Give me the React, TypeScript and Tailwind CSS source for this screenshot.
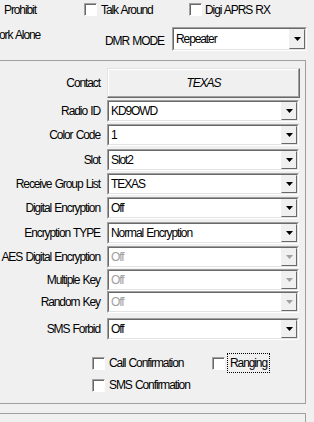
import React from 'react';

const font = { fontFamily: "'Liberation Sans', Arial, sans-serif" };

function Arrow({ disabled }: { disabled?: boolean }) {
  return (
    <svg width="7" height="4" viewBox="0 0 7 4">
      <path d="M0 0h7L3.5 4z" fill={disabled ? '#a0a0a0' : '#000'} />
    </svg>
  );
}

function Combo({ value, disabled, className = '' }: { value: string; disabled?: boolean; className?: string }) {
  return (
    <div className={`flex shrink-0 border border-t-[#a0a0a0] border-l-[#a0a0a0] border-b-white border-r-white ${className}`}>
      <div className="flex flex-1 items-stretch bg-white border border-t-[#696969] border-l-[#696969] border-b-[#e3e3e3] border-r-[#e3e3e3]">
        <span className={`flex-1 flex items-center pl-[2px] ${disabled ? 'text-[#a0a0a0]' : 'text-black'}`}>{value}</span>
        <div className="w-[16px] flex items-center justify-center bg-[#f0f0f0] border border-t-[#f0f0f0] border-l-[#f0f0f0] border-b-[#696969] border-r-[#696969]">
          <Arrow disabled={disabled} />
        </div>
      </div>
    </div>
  );
}

function Box() {
  return <div className="w-[13px] h-[13px] shrink-0 bg-white border border-t-[#a0a0a0] border-l-[#a0a0a0] border-b-white border-r-white shadow-[inset_1px_1px_0_#696969]" />;
}

function Row({ label, value, disabled, className = '' }: { label: string; value: string; disabled?: boolean; className?: string }) {
  return (
    <div className={`flex items-center h-[22px] ${className}`}>
      <div className="w-[100px] text-right">{label}</div>
      <Combo value={value} disabled={disabled} className="ml-[7px] h-[22px] w-[192px]" />
    </div>
  );
}

export default function App() {
  return (
    <div className="w-[314px] h-[422px] overflow-hidden whitespace-nowrap bg-[#f0f0f0] text-[12px] leading-[14px] tracking-[-1.1px] [word-spacing:1px] text-black" style={font}>
      {/* top options */}
      <div className="flex items-center pt-[3px] h-[16px]">
        <div className="w-[84px] pl-[4px]">Prohibit</div>
        <div className="w-[105px] flex items-center gap-[4px]">
          <Box />
          <span>Talk Around</span>
        </div>
        <div className="flex items-center gap-[3px]">
          <Box />
          <span>Digi APRS RX</span>
        </div>
      </div>
      <div className="flex items-start mt-[11px] h-[33px]">
        <div className="w-[106px] -ml-[1px] mt-[1px]">ork Alone</div>
        <div className="mt-[7px]">DMR MODE</div>
        <Combo value="Repeater" className="ml-auto mr-[7px] h-[24px] w-[135px]" />
      </div>

      {/* DMR group */}
      <div className="w-[306px] h-[344px] border-t border-r border-b border-[#a0a0a0]">
        <div className="flex items-center mt-[7px] h-[30px]">
          <div className="w-[100px] text-right">Contact</div>
          <button className="ml-[7px] w-[193px] h-[30px] bg-[#f0f0f0] italic border border-t-[#e3e3e3] border-l-[#e3e3e3] border-b-[#696969] border-r-[#696969] shadow-[inset_-1px_-1px_0_#a0a0a0,inset_1px_1px_0_#fff]">
            TEXAS
          </button>
        </div>
        <Row label="Radio ID" value="KD9OWD" className="mt-[2px]" />
        <Row label="Color Code" value="1" className="mt-[2px]" />
        <Row label="Slot" value="Slot2" className="mt-[3px]" />
        <Row label="Receive Group List" value="TEXAS" className="mt-[2px]" />
        <Row label="Digital Encryption" value="Off" className="mt-[2px]" />
        <Row label="Encryption TYPE" value="Normal Encryption" className="mt-[3px]" />
        <Row label="AES Digital Encryption" value="Off" disabled className="mt-[2px]" />
        <Row label="Multiple Key" value="Off" disabled className="mt-[1px]" />
        <Row label="Random Key" value="Off" disabled />
        <Row label="SMS Forbid" value="Off" className="mt-[5px]" />

        <div className="flex items-center h-[20px] mt-[13px] pl-[92px]">
          <div className="w-[120px] flex items-center gap-[4px]">
            <Box />
            <span>Call Confirmation</span>
          </div>
          <div className="flex items-center gap-[2px]">
            <Box />
            <span className="px-[2px] h-[20px] flex items-center border border-dotted border-black">Ranging</span>
          </div>
        </div>
        <div className="flex items-center h-[20px] mt-[2px] pl-[92px] gap-[4px]">
          <Box />
          <span>SMS Confirmation</span>
        </div>
      </div>

      <div className="w-[306px] h-[20px] mt-[9px] border-t border-r border-[#a0a0a0]" />
    </div>
  );
}
